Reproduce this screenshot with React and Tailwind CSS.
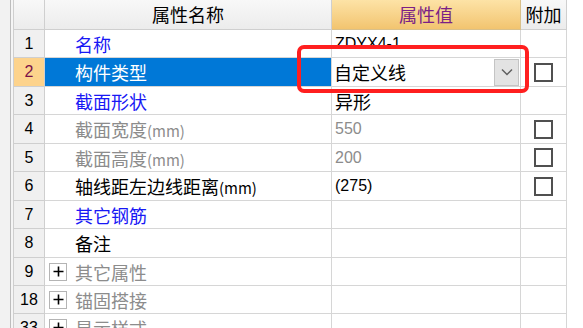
const cjk = { fontFamily: '"Noto Sans CJK SC", "Noto Sans", sans-serif' };
const latin = { fontFamily: '"Liberation Sans", Arial, sans-serif' };

const rows = [
  { n: '1', name: '名称', tone: 'blue', value: 'ZDYX4-1', h: 'h-[28px]' },
  { n: '2', name: '构件类型', selected: true, combo: '自定义线', check: true, h: 'h-[29px]' },
  { n: '3', name: '截面形状', tone: 'blue', value: '异形', cjkValue: true, h: 'h-[28px]' },
  { n: '4', name: '截面宽度', mm: true, tone: 'gray', value: '550', valueGray: true, check: true, h: 'h-[29px]' },
  { n: '5', name: '截面高度', mm: true, tone: 'gray', value: '200', valueGray: true, check: true, h: 'h-[28px]' },
  { n: '6', name: '轴线距左边线距离', mm: true, tone: 'black', value: '(275)', check: true, h: 'h-[29px]' },
  { n: '7', name: '其它钢筋', tone: 'blue', h: 'h-[28px]' },
  { n: '8', name: '备注', tone: 'black', h: 'h-[29px]' },
  { n: '9', name: '其它属性', tone: 'gray', plus: true, h: 'h-[28px]' },
  { n: '18', name: '锚固搭接', tone: 'gray', plus: true, h: 'h-[28px]' },
  { n: '33', name: '显示样式', tone: 'gray', plus: true, h: 'h-[28px]' },
];

const toneClass = {
  blue: 'text-[#1818f5]',
  gray: 'text-[#8c8c8c]',
  black: 'text-black',
};

const Checkbox = () => (
  <div className="w-[19px] h-[19px] border-2 border-[#505050] bg-white" />
);

const Row = ({ row }) => {
  const nameColor = row.selected ? 'text-white' : toneClass[row.tone];
  return (
    <div className={`flex shrink-0 ${row.h}`}>
      <div
        className={`w-[32px] shrink-0 flex items-center justify-center border-l border-r border-b border-[#cfcfcf] text-[16px] ${
          row.selected ? 'bg-[#fdd38c] text-[#7a1048]' : 'bg-[#f0f0f0] text-black'
        }`}
        style={latin}
      >
        {row.n}
      </div>
      <div
        className={`w-[287px] shrink-0 flex items-center border-r border-b border-[#d6d6d6] ${
          row.selected ? 'bg-[#0078d7]' : 'bg-white'
        }`}
      >
        {row.plus ? (
          <div className="w-[18px] h-[18px] ml-[4px] mr-[8px] border border-[#b4b4b4] bg-white flex items-center justify-center">
            <svg width="11" height="11" viewBox="0 0 11 11">
              <path d="M5.5 0.5V10.5M0.5 5.5H10.5" stroke="#000" strokeWidth="1.6" />
            </svg>
          </div>
        ) : (
          <div className="w-[30px] shrink-0" />
        )}
        <span className={`text-[18px] leading-none whitespace-nowrap ${nameColor}`} style={cjk}>
          {row.name}
          {row.mm && <span className="text-[15px]">(mm)</span>}
        </span>
      </div>
      <div className="w-[189px] shrink-0 flex items-center border-r border-b border-[#d6d6d6] bg-white">
        {row.combo ? (
          <div className="flex items-center justify-between w-full h-full pl-[2px] pr-[1px]">
            <span className="text-[18px] leading-none text-black" style={cjk}>
              {row.combo}
            </span>
            <div className="w-[25px] h-[27px] bg-[#e3e3e3] border border-[#c4c4c4] flex items-center justify-center">
              <svg width="12" height="8" viewBox="0 0 12 8">
                <path d="M1 1.5L6 6.5L11 1.5" fill="none" stroke="#606060" strokeWidth="1.5" />
              </svg>
            </div>
          </div>
        ) : row.value ? (
          <span
            className={`pl-[3px] leading-none whitespace-nowrap ${
              row.cjkValue ? 'text-[18px]' : 'text-[16px]'
            } ${row.valueGray ? 'text-[#8c8c8c]' : 'text-black'}`}
            style={row.cjkValue ? cjk : latin}
          >
            {row.value}
          </span>
        ) : null}
      </div>
      <div className="w-[46px] shrink-0 flex items-center justify-center border-r border-b border-[#d6d6d6] bg-white">
        {row.check && <Checkbox />}
      </div>
    </div>
  );
};

export default function App() {
  return (
    <div className="relative w-[583px] h-[328px] overflow-hidden bg-white flex items-start">
      <div className="flex shrink-0 self-stretch">
        <div className="w-[10px] bg-[#f2f2f2]" />
        <div className="w-[1px] bg-[#bdbdbd]" />
        <div className="w-[2px] bg-[#f5f5f5]" />
      </div>
      <div className="flex flex-col shrink-0">
        <div className="flex shrink-0 h-[30px]">
          <div className="w-[32px] shrink-0 border-l border-r border-b border-[#cfcfcf] bg-gradient-to-b from-[#f8f8f8] to-[#ececec]" />
          <div
            className="w-[287px] shrink-0 flex items-center justify-center border-r border-b border-[#cfcfcf] bg-gradient-to-b from-[#f8f8f8] to-[#ececec] text-[18px] text-black"
            style={cjk}
          >
            属性名称
          </div>
          <div
            className="w-[189px] shrink-0 flex items-center justify-center border-r border-b border-[#d9c08a] bg-gradient-to-b from-[#fde3a6] to-[#f2c46f] text-[18px] text-[#7b1f86]"
            style={cjk}
          >
            属性值
          </div>
          <div
            className="w-[46px] shrink-0 flex items-center justify-center border-r border-b border-[#cfcfcf] bg-gradient-to-b from-[#f8f8f8] to-[#ececec] text-[18px] text-black"
            style={cjk}
          >
            附加
          </div>
        </div>
        {rows.map((row) => (
          <Row key={row.n} row={row} />
        ))}
      </div>
      <div className="flex-1 self-stretch bg-white" />
      <div className="absolute left-[297px] top-[45px] w-[232px] h-[48px] border-[4px] border-[#ff1f1f] rounded-[7px]" />
    </div>
  );
}
